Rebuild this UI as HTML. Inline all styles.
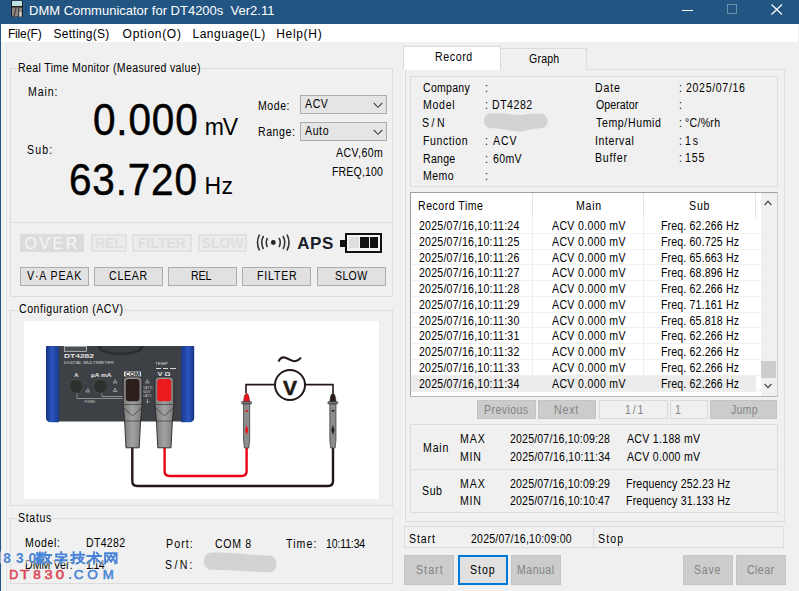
<!DOCTYPE html>
<html><head><meta charset="utf-8">
<style>
*{margin:0;padding:0;box-sizing:border-box}
html,body{width:799px;height:591px;overflow:hidden;background:#f0f0f0;font-family:"Liberation Sans",sans-serif;font-size:12px;color:#000}
.a{position:absolute}
.t{position:absolute;white-space:nowrap;line-height:1;font-family:"Liberation Sans",sans-serif}
.gb{position:absolute;border:1px solid #dcdcdc}
.btn{position:absolute;background:#e1e1e1;border:1px solid #adadad}
.dis{position:absolute;background:#cccccc;border:1px solid #c4c4c4}
</style></head><body>
<!-- title bar -->
<div class="a" style="left:0;top:0;width:799px;height:24px;background:#235582"></div>
<div class="a" style="left:0;top:0;width:1px;height:591px;background:#235582"></div>
<svg class="a" style="left:10px;top:0" width="14" height="18" viewBox="0 0 14 18">
<rect x="0.5" y="0" width="13" height="17.5" fill="#2860b0" opacity="0.7"/>
<rect x="1" y="0.5" width="12" height="16.5" fill="#1b1b1b"/>
<rect x="2" y="1" width="10" height="5" fill="#bde0e0"/>
<rect x="2" y="7.5" width="10" height="9" fill="#8d8985"/>
<path d="M4 16.5 L6 8 M8.5 16.5 V8" stroke="#4a4440" stroke-width="1.2"/>
<rect x="9.5" y="12" width="2" height="4.5" fill="#d8d8d8"/>
</svg>
<div class="a" style="left:29px;top:3px;color:#fff;font-size:13px;line-height:16px;white-space:nowrap">DMM Communicator for DT4200s&nbsp; Ver2.11</div>
<div class="a" style="left:682px;top:10px;width:11px;height:1px;background:#fff"></div>
<div class="a" style="left:727px;top:4px;width:10px;height:10px;border:1px solid #6d8fae"></div>
<svg class="a" style="left:771px;top:4px" width="12" height="11"><path d="M0.5 0.5L11 10.5M11 0.5L0.5 10.5" stroke="#fff" stroke-width="1.2"/></svg>
<!-- menu -->
<div class="a" style="left:1px;top:24px;width:797px;height:18px;background:#fff"></div>
<!-- left panel -->
<div class="a" style="left:4px;top:42px;width:1px;height:549px;background:#f8f8f8"></div>
<div class="a" style="left:6px;top:43px;width:1px;height:548px;background:#e6e6e6"></div>
<div class="gb" style="left:10px;top:68px;width:383px;height:229px"></div>
<div class="a" style="left:17px;top:62px;width:185px;height:12px;background:#f0f0f0"></div>
<!-- combos -->
<div class="a" style="left:300px;top:95px;width:87px;height:19px;background:#e5e5e5;border:1px solid #adadad"></div>
<svg class="a" style="left:373px;top:102px" width="10" height="7"><path d="M0.8 1L5 5.3L9.2 1" fill="none" stroke="#444" stroke-width="1.1"/></svg>
<div class="a" style="left:300px;top:122px;width:87px;height:19px;background:#e5e5e5;border:1px solid #adadad"></div>
<svg class="a" style="left:373px;top:129px" width="10" height="7"><path d="M0.8 1L5 5.3L9.2 1" fill="none" stroke="#444" stroke-width="1.1"/></svg>
<div class="a" style="left:11px;top:222px;width:381px;height:1px;background:#dcdcdc"></div>
<!-- indicators -->
<div class="a" style="left:20px;top:234px;width:64px;height:18px;background:#dcdcdc;color:#f7f7f7;font-size:16px;line-height:19px;text-align:left;padding-left:4.4px;letter-spacing:2.5px">OVER</div>
<div class="a" style="left:91px;top:234px;width:36px;height:18px;border:2px solid #e2e2e2;background:#ececec;color:#dedede;font-weight:bold;font-size:14px;line-height:14px;text-align:center">REL</div>
<div class="a" style="left:132px;top:234px;width:60px;height:18px;border:2px solid #e2e2e2;background:#ececec;color:#dedede;font-weight:bold;font-size:14px;line-height:14px;text-align:center">FILTER</div>
<div class="a" style="left:198px;top:234px;width:49px;height:18px;border:2px solid #e2e2e2;background:#ececec;color:#dedede;font-weight:bold;font-size:14px;line-height:14px;text-align:center">SLOW</div>
<svg class="a" style="left:256px;top:233px" width="35" height="19" viewBox="0 0 35 19">
<circle cx="17.3" cy="9.5" r="2.4" fill="#222"/>
<path d="M11.5 5 Q9 9.5 11.5 14 M7.5 3 Q4 9.5 7.5 16 M3.5 1.5 Q-0.5 9.5 3.5 17.5" fill="none" stroke="#333" stroke-width="1.6"/>
<path d="M23 5 Q25.5 9.5 23 14 M27 3 Q30.5 9.5 27 16 M31 1.5 Q35 9.5 31 17.5" fill="none" stroke="#333" stroke-width="1.6"/>
</svg>
<div class="a" style="left:340px;top:240px;width:6px;height:7px;background:#111"></div>
<div class="a" style="left:345px;top:233px;width:37px;height:20px;border:2px solid #111;background:#f4f4f4"></div>
<div class="a" style="left:349px;top:237px;width:10px;height:11px;background:#dedede"></div>
<div class="a" style="left:360px;top:237px;width:9px;height:11px;background:#111"></div>
<div class="a" style="left:370px;top:237px;width:8px;height:11px;background:#111"></div>
<!-- buttons -->
<div class="btn" style="left:20px;top:267px;width:69px;height:19px"></div>
<div class="btn" style="left:94px;top:267px;width:69px;height:19px"></div>
<div class="btn" style="left:168px;top:267px;width:69px;height:19px"></div>
<div class="btn" style="left:242px;top:267px;width:69px;height:19px"></div>
<div class="btn" style="left:317px;top:267px;width:69px;height:19px"></div>
<!-- configuration group -->
<div class="gb" style="left:10px;top:310px;width:383px;height:196px"></div>
<div class="a" style="left:17px;top:303px;width:107px;height:12px;background:#f0f0f0"></div>
<div class="a" style="left:24px;top:321px;width:355px;height:178px;background:#fff"></div>
<svg class="a" style="left:24px;top:321px" width="355" height="178" viewBox="24 321 355 178">
<defs>
<linearGradient id="bl" x1="0" x2="1" y1="0" y2="0"><stop offset="0" stop-color="#17337e"/><stop offset="0.45" stop-color="#2a56c0"/><stop offset="1" stop-color="#1a3a8c"/></linearGradient>
<linearGradient id="br" x1="0" x2="1" y1="0" y2="0"><stop offset="0" stop-color="#1a3a8c"/><stop offset="0.55" stop-color="#2a56c0"/><stop offset="1" stop-color="#17337e"/></linearGradient>
<linearGradient id="pg" x1="0" x2="1" y1="0" y2="0"><stop offset="0" stop-color="#7a7a7a"/><stop offset="0.5" stop-color="#a2a2a2"/><stop offset="1" stop-color="#7a7a7a"/></linearGradient>
</defs>
<!-- wires -->
<path d="M132.3 446 V481 Q132.3 486 137.3 486 H328 Q333 486 333 481 V447" fill="none" stroke="#231815" stroke-width="2.4"/>
<path d="M164.6 446 V471 Q164.6 476 169.6 476 H241.6 Q246.6 476 246.6 471 V447" fill="none" stroke="#e60012" stroke-width="2.4"/>
<!-- meter body -->
<rect x="52" y="346" width="136" height="75.5" fill="#3d4045"/>
<path d="M59 346 H46.5 Q46 346 46 347 V417.5 Q46 422.3 51 422.3 H59 Z" fill="url(#bl)"/>
<path d="M181.2 346 H193.7 Q194.2 346 194.2 347 V417.5 Q194.2 422.3 189.2 422.3 H181.2 Z" fill="url(#br)"/>
<path d="M97 346 Q99 355 120.5 355 Q142 355 144 346 Z" fill="#2b2d30"/>
<path d="M100.5 346 Q102.5 352.6 120.5 352.6 Q138.5 352.6 140.5 346 Z" fill="#393c40"/>
<rect x="64.3" y="346.3" width="22.3" height="5" fill="#4b4e53" stroke="#d8d8d8" stroke-width="0.7"/>
<text x="64" y="358.4" font-family="Liberation Sans" font-weight="bold" font-size="5.6" fill="#e2e2e2" textLength="30" lengthAdjust="spacingAndGlyphs">DT4282</text>
<text x="63.8" y="363.8" font-family="Liberation Sans" font-size="3.8" fill="#d2d2d2" textLength="50" lengthAdjust="spacingAndGlyphs">DIGITAL MULTIMETER</text>
<text x="74.3" y="376.6" font-family="Liberation Sans" font-weight="bold" font-size="5.8" fill="#e6e6e6">A</text>
<text x="91" y="376.6" font-family="Liberation Sans" font-weight="bold" font-size="5.6" fill="#e6e6e6" textLength="20.5" lengthAdjust="spacingAndGlyphs">µA mA</text>
<circle cx="76" cy="386.3" r="7" fill="#2c322e" stroke="#4d534f" stroke-width="0.7"/>
<circle cx="100.6" cy="386.3" r="7" fill="#2c322e" stroke="#4d534f" stroke-width="0.7"/>
<path d="M77 393.5 V398.5 H123 M102 393.5 V396.5 H123" fill="none" stroke="#c4c4c4" stroke-width="0.6"/>
<text x="84.5" y="403.3" font-family="Liberation Sans" font-size="3.2" fill="#cfcfcf">FUSED</text>
<path d="M86 392 l1.8 -3.4 l1.8 3.4z M113.3 383 l1.8 -3.4 l1.8 3.4z M113.3 391.5 l1.8 -3.4 l1.8 3.4z M145.5 383 l1.8 -3.4 l1.8 3.4z" fill="none" stroke="#d4d4d4" stroke-width="0.6"/>
<text x="143.2" y="389" font-family="Liberation Sans" font-size="3" fill="#d0d0d0">CAT III</text>
<text x="143.2" y="393" font-family="Liberation Sans" font-size="3" fill="#d0d0d0">600V</text>
<text x="143.2" y="397" font-family="Liberation Sans" font-size="3" fill="#d0d0d0">CAT II</text>
<path d="M147.5 399 v4 m-1.5 -1.5 l1.5 1.5 l1.5 -1.5" fill="none" stroke="#d0d0d0" stroke-width="0.6"/>
<rect x="124" y="371.6" width="17" height="4.8" fill="#e8e8e8"/>
<text x="125" y="375.8" font-family="Liberation Sans" font-weight="bold" font-size="4.6" fill="#222" textLength="15" lengthAdjust="spacingAndGlyphs">COM</text>
<text x="157.5" y="376.3" font-family="Liberation Sans" font-weight="bold" font-size="5.8" fill="#e6e6e6" textLength="13" lengthAdjust="spacingAndGlyphs">V Ω</text>
<text x="155" y="365" font-family="Liberation Sans" font-size="3.3" fill="#d8d8d8" textLength="13" lengthAdjust="spacingAndGlyphs">TEMP</text>
<path d="M156 368.5 h5 M163 368.5 h5 M170 368.5 h6" stroke="#d8d8d8" stroke-width="1"/>
<!-- plugs -->
<g stroke="#262626" stroke-width="0.9">
<path d="M123.2 380 Q123.2 377 126.5 377 H138.8 Q142 377 142 380 V404.5 L140.6 421 L139.2 447.8 H126 L124.6 421 L123.2 404.5 Z" fill="url(#pg)"/>
<path d="M155 380 Q155 377 158.3 377 H170.6 Q173.8 377 173.8 380 V404.5 L172.4 421 L171 447.8 H157.8 L156.4 421 L155 404.5 Z" fill="url(#pg)"/>
</g>
<rect x="125.8" y="379" width="13.7" height="22.3" rx="3" fill="#2c1e1b"/>
<rect x="157.2" y="379" width="14" height="22.3" rx="3" fill="#ea1a1f"/>
<path d="M123.5 404.5 H141.7 M123.8 408 L132.6 416 L141.4 408 M124.6 421 H140.6 M155.3 404.5 H173.5 M155.6 408 L164.4 416 L173.2 408 M156.4 421 H172.4" fill="none" stroke="#3a3a3a" stroke-width="0.7"/>
<!-- top circuit -->
<path d="M246 393 V384.6 H274.5 M305.3 384.6 H333 V393" fill="none" stroke="#231815" stroke-width="1.6"/>
<circle cx="290" cy="385" r="15" fill="#fff" stroke="#231815" stroke-width="2"/>
<text x="290" y="394.5" text-anchor="middle" font-family="Liberation Sans" font-weight="bold" font-size="21" fill="#231815" stroke="#231815" stroke-width="0.6">V</text>
<path d="M278.5 361.5 Q281 356 285.5 357.8 T292.5 360.8 Q297.5 362.3 301 357.5" fill="none" stroke="#231815" stroke-width="2"/>
<!-- probes -->
<g>
<path d="M243.5 402 Q244 394 246.6 393 Q249.2 394 249.7 402 Z" fill="#e8161c" stroke="#5a1010" stroke-width="0.5"/>
<rect x="241.5" y="401.5" width="10" height="2.6" rx="1" fill="#777" stroke="#333" stroke-width="0.6"/>
<path d="M243.5 404 H249.7 V440 L248.8 448 H244.4 L243.5 440 Z" fill="#8c8c8c" stroke="#333" stroke-width="0.7"/>
<rect x="245.3" y="410" width="2.6" height="1.6" fill="#e8161c"/>
<path d="M246.6 425 L248.3 430 L246.6 435 L244.9 430 Z" fill="#e8161c"/>
</g>
<g>
<path d="M329.8 402 Q330.3 394 332.9 393 Q335.5 394 336 402 Z" fill="#2b1d1a" stroke="#111" stroke-width="0.5"/>
<rect x="327.8" y="401.5" width="10" height="2.6" rx="1" fill="#777" stroke="#333" stroke-width="0.6"/>
<path d="M329.8 404 H336 V440 L335.1 448 H330.7 L329.8 440 Z" fill="#8c8c8c" stroke="#333" stroke-width="0.7"/>
<rect x="331.6" y="410" width="2.6" height="1.6" fill="#222"/>
<path d="M332.9 425 L334.6 430 L332.9 435 L331.2 430 Z" fill="#222"/>
</g>
</svg>
<!-- status group -->
<div class="gb" style="left:10px;top:518px;width:383px;height:66px"></div>
<div class="a" style="left:17px;top:512px;width:35px;height:12px;background:#f0f0f0"></div>
<svg class="a" style="left:200px;top:549px" width="82" height="27" viewBox="200 549 82 27"><path d="M212 552.5 C240 552.5 250 555.3 270 555.8 C279 556 278.5 572.3 269 572.3 C250 572 235 569.5 212 570.1 C201 570.3 201 552.5 212 552.5 Z" fill="#d3d3d3"/></svg>
<!-- right panel: tabs -->
<div class="a" style="left:403px;top:69px;width:1px;height:453px;background:#fafafa"></div>
<div class="a" style="left:405px;top:69px;width:380px;height:453px;border:1px solid #dedede"></div>
<div class="a" style="left:500px;top:48px;width:87px;height:22px;background:#f0f0f0;border:1px solid #dcdcdc;border-bottom:none"></div>
<div class="a" style="left:403px;top:46px;width:98px;height:24px;background:#fff;border:1px solid #dcdcdc;border-bottom:none"></div>
<!-- info box -->
<div class="a" style="left:410px;top:76px;width:368px;height:111px;border:1px solid #dcdcdc"></div>
<svg class="a" style="left:480px;top:110px" width="72" height="24" viewBox="480 110 72 24"><path d="M491 113.2 C505 113.2 512 114.5 519 115 C526 114.5 532 113.5 540 113.5 C550 113.5 550.5 128.2 540 128.2 C532 128.3 526 131.5 519 131.5 C512 131.5 505 128.2 491 128.2 C481.5 128.2 481.5 113.2 491 113.2 Z" fill="#d3d3d3"/></svg>
<!-- table -->
<div class="a" style="left:410px;top:192px;width:368px;height:205px;border:1px solid #a0a0a0;background:#fff;border-right-color:#d0d0d0;border-bottom-color:#b8b8b8"></div>
<div class="a" style="left:532px;top:193px;width:1px;height:25px;background:#e5e5e5"></div>
<div class="a" style="left:643px;top:193px;width:1px;height:25px;background:#e5e5e5"></div>
<div class="a" style="left:755px;top:193px;width:1px;height:25px;background:#e5e5e5"></div>
<div class="a" style="left:761px;top:193px;width:16px;height:203px;background:#f0f0f0"></div>
<svg class="a" style="left:764px;top:200px" width="8" height="6"><path d="M0.6 5L4 1.3L7.4 5" fill="none" stroke="#555" stroke-width="1.4"/></svg>
<svg class="a" style="left:764px;top:383px" width="8" height="6"><path d="M0.6 1L4 4.7L7.4 1" fill="none" stroke="#555" stroke-width="1.4"/></svg>
<div class="a" style="left:761px;top:361px;width:15px;height:17px;background:#cdcdcd"></div>
<div class="a" style="left:411px;top:232.76px;width:350px;height:1px;background:#f0f0f0"></div>
<div class="a" style="left:411px;top:248.52px;width:350px;height:1px;background:#f0f0f0"></div>
<div class="a" style="left:411px;top:264.28px;width:350px;height:1px;background:#f0f0f0"></div>
<div class="a" style="left:411px;top:280.04px;width:350px;height:1px;background:#f0f0f0"></div>
<div class="a" style="left:411px;top:295.80px;width:350px;height:1px;background:#f0f0f0"></div>
<div class="a" style="left:411px;top:311.56px;width:350px;height:1px;background:#f0f0f0"></div>
<div class="a" style="left:411px;top:327.32px;width:350px;height:1px;background:#f0f0f0"></div>
<div class="a" style="left:411px;top:343.08px;width:350px;height:1px;background:#f0f0f0"></div>
<div class="a" style="left:411px;top:358.84px;width:350px;height:1px;background:#f0f0f0"></div>
<div class="a" style="left:411px;top:374.60px;width:350px;height:1px;background:#f0f0f0"></div>
<div class="a" style="left:411px;top:375.60px;width:345px;height:16px;background:#ececec"></div>
<div class="a" style="left:411px;top:390.36px;width:350px;height:1px;background:#f0f0f0"></div>
<div class="a" style="left:532px;top:218px;width:1px;height:174px;background:#f0f0f0"></div>
<div class="a" style="left:643px;top:218px;width:1px;height:174px;background:#f0f0f0"></div>
<!-- pagination -->
<div class="dis" style="left:477px;top:400px;width:59px;height:19px"></div>
<div class="dis" style="left:538px;top:400px;width:58px;height:19px"></div>
<div class="a" style="left:599px;top:400px;width:69px;height:19px;border:1px solid #dadada;background:#f0f0f0"></div>
<div class="a" style="left:670px;top:400px;width:38px;height:19px;border:1px solid #dadada;background:#f0f0f0"></div>
<div class="dis" style="left:710px;top:400px;width:67px;height:19px"></div>
<!-- stats -->
<div class="a" style="left:410px;top:424px;width:368px;height:89px;border:1px solid #dcdcdc"></div>
<div class="a" style="left:411px;top:469px;width:366px;height:1px;background:#dcdcdc"></div>
<!-- status bar -->
<div class="a" style="left:404px;top:526px;width:190px;height:22px;border:1px solid #dcdcdc"></div>
<div class="a" style="left:593px;top:526px;width:191px;height:22px;border:1px solid #dcdcdc"></div>
<!-- bottom buttons -->
<div class="dis" style="left:404px;top:555px;width:50px;height:30px"></div>
<div class="btn" style="left:458px;top:555px;width:50px;height:30px;border:2px solid #0078d7"></div>
<div class="dis" style="left:511px;top:555px;width:50px;height:30px"></div>
<div class="dis" style="left:683px;top:555px;width:50px;height:30px"></div>
<div class="dis" style="left:736px;top:555px;width:50px;height:30px"></div>

<div class="t" style="left:7.90px;top:28.00px;font-size:12px;letter-spacing:-0.150px;">File(F)</div>
<div class="t" style="left:53.40px;top:28.00px;font-size:12px;letter-spacing:0.289px;">Setting(S)</div>
<div class="t" style="left:122.60px;top:28.00px;font-size:12px;letter-spacing:0.700px;">Option(O)</div>
<div class="t" style="left:192.60px;top:28.00px;font-size:12px;letter-spacing:0.460px;">Language(L)</div>
<div class="t" style="left:276.20px;top:28.00px;font-size:12px;letter-spacing:0.683px;">Help(H)</div>
<div class="t" style="left:18.30px;top:62.00px;font-size:12px;letter-spacing:0.403px;;transform:scaleX(0.88);transform-origin:0 0">Real Time Monitor (Measured value)</div>
<div class="t" style="left:27.70px;top:85.50px;font-size:12px;letter-spacing:1.023px;;transform:scaleX(0.88);transform-origin:0 0">Main:</div>
<div class="t" style="left:93.00px;top:98.30px;font-size:44px;letter-spacing:0.924px;-webkit-text-stroke:0.5px #000;transform:scaleX(0.92);transform-origin:0 0">0.000</div>
<div class="t" style="left:204.80px;top:116.00px;font-size:23px;letter-spacing:-1.100px;">mV</div>
<div class="t" style="left:257.90px;top:99.60px;font-size:12px;letter-spacing:0.625px;;transform:scaleX(0.88);transform-origin:0 0">Mode:</div>
<div class="t" style="left:305.10px;top:98.20px;font-size:12px;letter-spacing:0.682px;;transform:scaleX(0.88);transform-origin:0 0">ACV</div>
<div class="t" style="left:257.90px;top:125.60px;font-size:12px;letter-spacing:0.636px;;transform:scaleX(0.88);transform-origin:0 0">Range:</div>
<div class="t" style="left:305.10px;top:124.80px;font-size:12px;letter-spacing:0.682px;;transform:scaleX(0.88);transform-origin:0 0">Auto</div>
<div class="t" style="left:335.80px;top:146.80px;font-size:12px;letter-spacing:0.511px;;transform:scaleX(0.88);transform-origin:0 0">ACV,60m</div>
<div class="t" style="left:331.50px;top:165.80px;font-size:12px;letter-spacing:0.162px;;transform:scaleX(0.88);transform-origin:0 0">FREQ,100</div>
<div class="t" style="left:27.30px;top:144.40px;font-size:12px;letter-spacing:1.288px;;transform:scaleX(0.88);transform-origin:0 0">Sub:</div>
<div class="t" style="left:69.00px;top:157.50px;font-size:44px;letter-spacing:0.891px;-webkit-text-stroke:0.5px #000;transform:scaleX(0.92);transform-origin:0 0">63.720</div>
<div class="t" style="left:204.60px;top:175.40px;font-size:23px;letter-spacing:0.400px;">Hz</div>
<div class="t" style="left:26.60px;top:270.30px;font-size:12px;letter-spacing:1.006px;;transform:scaleX(0.88);transform-origin:0 0">V·A PEAK</div>
<div class="t" style="left:108.80px;top:270.30px;font-size:12px;letter-spacing:0.852px;;transform:scaleX(0.88);transform-origin:0 0">CLEAR</div>
<div class="t" style="left:190.80px;top:270.30px;font-size:12px;letter-spacing:-0.114px;;transform:scaleX(0.88);transform-origin:0 0">REL</div>
<div class="t" style="left:256.60px;top:270.30px;font-size:12px;letter-spacing:0.932px;;transform:scaleX(0.88);transform-origin:0 0">FILTER</div>
<div class="t" style="left:334.90px;top:270.30px;font-size:12px;letter-spacing:0.379px;;transform:scaleX(0.88);transform-origin:0 0">SLOW</div>
<div class="t" style="left:297.20px;top:234.70px;font-size:17px;letter-spacing:0.650px;color:#1b1d2b;font-weight:bold">APS</div>
<div class="t" style="left:18.80px;top:303.30px;font-size:12px;letter-spacing:0.600px;;transform:scaleX(0.88);transform-origin:0 0">Configuration (ACV)</div>
<div class="t" style="left:17.50px;top:511.80px;font-size:12px;letter-spacing:0.773px;;transform:scaleX(0.88);transform-origin:0 0">Status</div>
<div class="t" style="left:25.30px;top:537.30px;font-size:12px;letter-spacing:0.727px;;transform:scaleX(0.88);transform-origin:0 0">Model:</div>
<div class="t" style="left:85.50px;top:537.30px;font-size:12px;letter-spacing:0.341px;;transform:scaleX(0.88);transform-origin:0 0">DT4282</div>
<div class="t" style="left:25.30px;top:558.80px;font-size:12px;letter-spacing:0.114px;;transform:scaleX(0.88);transform-origin:0 0">DMM Ver:</div>
<div class="t" style="left:86.30px;top:558.80px;font-size:12px;letter-spacing:-0.720px;;transform:scaleX(0.88);transform-origin:0 0">1.14</div>
<div class="t" style="left:166.20px;top:537.60px;font-size:12px;letter-spacing:1.278px;;transform:scaleX(0.88);transform-origin:0 0">Port:</div>
<div class="t" style="left:214.80px;top:537.60px;font-size:12px;letter-spacing:0.767px;;transform:scaleX(0.88);transform-origin:0 0">COM 8</div>
<div class="t" style="left:286.00px;top:537.60px;font-size:12px;letter-spacing:1.222px;;transform:scaleX(0.88);transform-origin:0 0">Time:</div>
<div class="t" style="left:325.80px;top:537.60px;font-size:12px;letter-spacing:-0.179px;;transform:scaleX(0.88);transform-origin:0 0">10:11:34</div>
<div class="t" style="left:165.30px;top:558.60px;font-size:12px;letter-spacing:2.652px;;transform:scaleX(0.88);transform-origin:0 0">S/N:</div>
<div class="t" style="left:434.50px;top:51.30px;font-size:12px;letter-spacing:0.705px;;transform:scaleX(0.88);transform-origin:0 0">Record</div>
<div class="t" style="left:529.40px;top:52.80px;font-size:12px;letter-spacing:0.227px;;transform:scaleX(0.88);transform-origin:0 0">Graph</div>
<div class="t" style="left:422.90px;top:81.70px;font-size:12px;letter-spacing:0.284px;;transform:scaleX(0.88);transform-origin:0 0">Company</div>
<div class="t" style="left:422.80px;top:99.20px;font-size:12px;letter-spacing:0.824px;;transform:scaleX(0.88);transform-origin:0 0">Model</div>
<div class="t" style="left:422.00px;top:116.70px;font-size:12px;letter-spacing:2.841px;;transform:scaleX(0.88);transform-origin:0 0">S/N</div>
<div class="t" style="left:422.80px;top:134.60px;font-size:12px;letter-spacing:0.649px;;transform:scaleX(0.88);transform-origin:0 0">Function</div>
<div class="t" style="left:422.80px;top:152.50px;font-size:12px;letter-spacing:0.312px;;transform:scaleX(0.88);transform-origin:0 0">Range</div>
<div class="t" style="left:422.80px;top:170.20px;font-size:12px;letter-spacing:0.492px;;transform:scaleX(0.88);transform-origin:0 0">Memo</div>
<div class="t" style="left:485.00px;top:81.70px;font-size:12px;letter-spacing:0.000px;;transform:scaleX(0.88);transform-origin:0 0">:</div>
<div class="t" style="left:485.00px;top:99.20px;font-size:12px;letter-spacing:0.000px;;transform:scaleX(0.88);transform-origin:0 0">:</div>
<div class="t" style="left:485.00px;top:134.60px;font-size:12px;letter-spacing:0.000px;;transform:scaleX(0.88);transform-origin:0 0">:</div>
<div class="t" style="left:485.00px;top:152.50px;font-size:12px;letter-spacing:0.000px;;transform:scaleX(0.88);transform-origin:0 0">:</div>
<div class="t" style="left:485.00px;top:170.20px;font-size:12px;letter-spacing:0.000px;;transform:scaleX(0.88);transform-origin:0 0">:</div>
<div class="t" style="left:492.00px;top:99.20px;font-size:12px;letter-spacing:0.591px;;transform:scaleX(0.88);transform-origin:0 0">DT4282</div>
<div class="t" style="left:493.00px;top:134.60px;font-size:12px;letter-spacing:1.023px;;transform:scaleX(0.88);transform-origin:0 0">ACV</div>
<div class="t" style="left:493.00px;top:152.50px;font-size:12px;letter-spacing:0.379px;;transform:scaleX(0.88);transform-origin:0 0">60mV</div>
<div class="t" style="left:595.40px;top:81.60px;font-size:12px;letter-spacing:0.985px;;transform:scaleX(0.88);transform-origin:0 0">Date</div>
<div class="t" style="left:596.40px;top:99.20px;font-size:12px;letter-spacing:0.097px;;transform:scaleX(0.88);transform-origin:0 0">Operator</div>
<div class="t" style="left:596.40px;top:116.70px;font-size:12px;letter-spacing:0.720px;;transform:scaleX(0.88);transform-origin:0 0">Temp/Humid</div>
<div class="t" style="left:595.40px;top:134.60px;font-size:12px;letter-spacing:0.666px;;transform:scaleX(0.88);transform-origin:0 0">Interval</div>
<div class="t" style="left:595.40px;top:152.30px;font-size:12px;letter-spacing:0.909px;;transform:scaleX(0.88);transform-origin:0 0">Buffer</div>
<div class="t" style="left:678.50px;top:81.60px;font-size:12px;letter-spacing:0.000px;;transform:scaleX(0.88);transform-origin:0 0">:</div>
<div class="t" style="left:678.50px;top:99.20px;font-size:12px;letter-spacing:0.000px;;transform:scaleX(0.88);transform-origin:0 0">:</div>
<div class="t" style="left:678.50px;top:116.70px;font-size:12px;letter-spacing:0.000px;;transform:scaleX(0.88);transform-origin:0 0">:</div>
<div class="t" style="left:678.50px;top:134.60px;font-size:12px;letter-spacing:0.000px;;transform:scaleX(0.88);transform-origin:0 0">:</div>
<div class="t" style="left:678.50px;top:152.30px;font-size:12px;letter-spacing:0.000px;;transform:scaleX(0.88);transform-origin:0 0">:</div>
<div class="t" style="left:686.10px;top:81.60px;font-size:12px;letter-spacing:0.770px;;transform:scaleX(0.88);transform-origin:0 0">2025/07/16</div>
<div class="t" style="left:684.70px;top:116.70px;font-size:12px;letter-spacing:0.341px;;transform:scaleX(0.88);transform-origin:0 0">°C/%rh</div>
<div class="t" style="left:684.70px;top:134.60px;font-size:12px;letter-spacing:2.045px;;transform:scaleX(0.88);transform-origin:0 0">1s</div>
<div class="t" style="left:685.00px;top:152.30px;font-size:12px;letter-spacing:0.966px;;transform:scaleX(0.88);transform-origin:0 0">155</div>
<div class="t" style="left:417.50px;top:200.00px;font-size:12px;letter-spacing:0.580px;;transform:scaleX(0.88);transform-origin:0 0">Record Time</div>
<div class="t" style="left:575.90px;top:199.60px;font-size:12px;letter-spacing:0.871px;;transform:scaleX(0.88);transform-origin:0 0">Main</div>
<div class="t" style="left:688.90px;top:199.80px;font-size:12px;letter-spacing:0.966px;;transform:scaleX(0.88);transform-origin:0 0">Sub</div>
<div class="t" style="left:418.50px;top:220.00px;font-size:12px;letter-spacing:0.265px;;transform:scaleX(0.88);transform-origin:0 0">2025/07/16,10:11:24</div>
<div class="t" style="left:552.00px;top:220.00px;font-size:12px;letter-spacing:0.382px;;transform:scaleX(0.88);transform-origin:0 0">ACV 0.000 mV</div>
<div class="t" style="left:660.80px;top:220.00px;font-size:12px;letter-spacing:0.187px;;transform:scaleX(0.88);transform-origin:0 0">Freq. 62.266 Hz</div>
<div class="t" style="left:418.50px;top:235.76px;font-size:12px;letter-spacing:0.265px;;transform:scaleX(0.88);transform-origin:0 0">2025/07/16,10:11:25</div>
<div class="t" style="left:552.00px;top:235.76px;font-size:12px;letter-spacing:0.382px;;transform:scaleX(0.88);transform-origin:0 0">ACV 0.000 mV</div>
<div class="t" style="left:660.80px;top:235.76px;font-size:12px;letter-spacing:0.187px;;transform:scaleX(0.88);transform-origin:0 0">Freq. 60.725 Hz</div>
<div class="t" style="left:418.50px;top:251.52px;font-size:12px;letter-spacing:0.265px;;transform:scaleX(0.88);transform-origin:0 0">2025/07/16,10:11:26</div>
<div class="t" style="left:552.00px;top:251.52px;font-size:12px;letter-spacing:0.382px;;transform:scaleX(0.88);transform-origin:0 0">ACV 0.000 mV</div>
<div class="t" style="left:660.80px;top:251.52px;font-size:12px;letter-spacing:0.187px;;transform:scaleX(0.88);transform-origin:0 0">Freq. 65.663 Hz</div>
<div class="t" style="left:418.50px;top:267.28px;font-size:12px;letter-spacing:0.265px;;transform:scaleX(0.88);transform-origin:0 0">2025/07/16,10:11:27</div>
<div class="t" style="left:552.00px;top:267.28px;font-size:12px;letter-spacing:0.382px;;transform:scaleX(0.88);transform-origin:0 0">ACV 0.000 mV</div>
<div class="t" style="left:660.80px;top:267.28px;font-size:12px;letter-spacing:0.187px;;transform:scaleX(0.88);transform-origin:0 0">Freq. 68.896 Hz</div>
<div class="t" style="left:418.50px;top:283.04px;font-size:12px;letter-spacing:0.265px;;transform:scaleX(0.88);transform-origin:0 0">2025/07/16,10:11:28</div>
<div class="t" style="left:552.00px;top:283.04px;font-size:12px;letter-spacing:0.382px;;transform:scaleX(0.88);transform-origin:0 0">ACV 0.000 mV</div>
<div class="t" style="left:660.80px;top:283.04px;font-size:12px;letter-spacing:0.187px;;transform:scaleX(0.88);transform-origin:0 0">Freq. 62.266 Hz</div>
<div class="t" style="left:418.50px;top:298.80px;font-size:12px;letter-spacing:0.265px;;transform:scaleX(0.88);transform-origin:0 0">2025/07/16,10:11:29</div>
<div class="t" style="left:552.00px;top:298.80px;font-size:12px;letter-spacing:0.382px;;transform:scaleX(0.88);transform-origin:0 0">ACV 0.000 mV</div>
<div class="t" style="left:660.80px;top:298.80px;font-size:12px;letter-spacing:0.187px;;transform:scaleX(0.88);transform-origin:0 0">Freq. 71.161 Hz</div>
<div class="t" style="left:418.50px;top:314.56px;font-size:12px;letter-spacing:0.265px;;transform:scaleX(0.88);transform-origin:0 0">2025/07/16,10:11:30</div>
<div class="t" style="left:552.00px;top:314.56px;font-size:12px;letter-spacing:0.382px;;transform:scaleX(0.88);transform-origin:0 0">ACV 0.000 mV</div>
<div class="t" style="left:660.80px;top:314.56px;font-size:12px;letter-spacing:0.187px;;transform:scaleX(0.88);transform-origin:0 0">Freq. 65.818 Hz</div>
<div class="t" style="left:418.50px;top:330.32px;font-size:12px;letter-spacing:0.265px;;transform:scaleX(0.88);transform-origin:0 0">2025/07/16,10:11:31</div>
<div class="t" style="left:552.00px;top:330.32px;font-size:12px;letter-spacing:0.382px;;transform:scaleX(0.88);transform-origin:0 0">ACV 0.000 mV</div>
<div class="t" style="left:660.80px;top:330.32px;font-size:12px;letter-spacing:0.187px;;transform:scaleX(0.88);transform-origin:0 0">Freq. 62.266 Hz</div>
<div class="t" style="left:418.50px;top:346.08px;font-size:12px;letter-spacing:0.265px;;transform:scaleX(0.88);transform-origin:0 0">2025/07/16,10:11:32</div>
<div class="t" style="left:552.00px;top:346.08px;font-size:12px;letter-spacing:0.382px;;transform:scaleX(0.88);transform-origin:0 0">ACV 0.000 mV</div>
<div class="t" style="left:660.80px;top:346.08px;font-size:12px;letter-spacing:0.187px;;transform:scaleX(0.88);transform-origin:0 0">Freq. 62.266 Hz</div>
<div class="t" style="left:418.50px;top:361.84px;font-size:12px;letter-spacing:0.265px;;transform:scaleX(0.88);transform-origin:0 0">2025/07/16,10:11:33</div>
<div class="t" style="left:552.00px;top:361.84px;font-size:12px;letter-spacing:0.382px;;transform:scaleX(0.88);transform-origin:0 0">ACV 0.000 mV</div>
<div class="t" style="left:660.80px;top:361.84px;font-size:12px;letter-spacing:0.187px;;transform:scaleX(0.88);transform-origin:0 0">Freq. 62.266 Hz</div>
<div class="t" style="left:418.50px;top:377.60px;font-size:12px;letter-spacing:0.265px;;transform:scaleX(0.88);transform-origin:0 0">2025/07/16,10:11:34</div>
<div class="t" style="left:552.00px;top:377.60px;font-size:12px;letter-spacing:0.382px;;transform:scaleX(0.88);transform-origin:0 0">ACV 0.000 mV</div>
<div class="t" style="left:660.80px;top:377.60px;font-size:12px;letter-spacing:0.187px;;transform:scaleX(0.88);transform-origin:0 0">Freq. 62.266 Hz</div>
<div class="t" style="left:484.00px;top:404.20px;font-size:12px;letter-spacing:0.487px;color:#838383;transform:scaleX(0.88);transform-origin:0 0">Previous</div>
<div class="t" style="left:553.70px;top:404.20px;font-size:12px;letter-spacing:0.947px;color:#838383;transform:scaleX(0.88);transform-origin:0 0">Next</div>
<div class="t" style="left:624.60px;top:404.20px;font-size:12px;letter-spacing:2.045px;color:#838383;transform:scaleX(0.88);transform-origin:0 0">1/1</div>
<div class="t" style="left:674.80px;top:404.20px;font-size:12px;letter-spacing:0.000px;color:#838383;transform:scaleX(0.88);transform-origin:0 0">1</div>
<div class="t" style="left:730.90px;top:403.80px;font-size:12px;letter-spacing:0.265px;color:#838383;transform:scaleX(0.88);transform-origin:0 0">Jump</div>
<div class="t" style="left:422.60px;top:442.20px;font-size:12px;letter-spacing:0.947px;;transform:scaleX(0.88);transform-origin:0 0">Main</div>
<div class="t" style="left:421.80px;top:485.00px;font-size:12px;letter-spacing:0.682px;;transform:scaleX(0.88);transform-origin:0 0">Sub</div>
<div class="t" style="left:460.20px;top:432.90px;font-size:12px;letter-spacing:1.136px;;transform:scaleX(0.88);transform-origin:0 0">MAX</div>
<div class="t" style="left:509.50px;top:432.90px;font-size:12px;letter-spacing:0.196px;;transform:scaleX(0.88);transform-origin:0 0">2025/07/16,10:09:28</div>
<div class="t" style="left:626.50px;top:432.90px;font-size:12px;letter-spacing:0.341px;;transform:scaleX(0.88);transform-origin:0 0">ACV 1.188 mV</div>
<div class="t" style="left:460.20px;top:450.50px;font-size:12px;letter-spacing:0.909px;;transform:scaleX(0.88);transform-origin:0 0">MIN</div>
<div class="t" style="left:509.50px;top:450.50px;font-size:12px;letter-spacing:0.259px;;transform:scaleX(0.88);transform-origin:0 0">2025/07/16,10:11:34</div>
<div class="t" style="left:626.50px;top:450.50px;font-size:12px;letter-spacing:0.341px;;transform:scaleX(0.88);transform-origin:0 0">ACV 0.000 mV</div>
<div class="t" style="left:460.20px;top:477.60px;font-size:12px;letter-spacing:1.136px;;transform:scaleX(0.88);transform-origin:0 0">MAX</div>
<div class="t" style="left:509.50px;top:477.60px;font-size:12px;letter-spacing:0.196px;;transform:scaleX(0.88);transform-origin:0 0">2025/07/16,10:09:29</div>
<div class="t" style="left:625.50px;top:477.60px;font-size:12px;letter-spacing:0.208px;;transform:scaleX(0.88);transform-origin:0 0">Frequency 252.23 Hz</div>
<div class="t" style="left:460.20px;top:495.00px;font-size:12px;letter-spacing:0.909px;;transform:scaleX(0.88);transform-origin:0 0">MIN</div>
<div class="t" style="left:509.50px;top:495.00px;font-size:12px;letter-spacing:0.196px;;transform:scaleX(0.88);transform-origin:0 0">2025/07/16,10:10:47</div>
<div class="t" style="left:625.50px;top:495.00px;font-size:12px;letter-spacing:0.208px;;transform:scaleX(0.88);transform-origin:0 0">Frequency 31.133 Hz</div>
<div class="t" style="left:409.20px;top:533.10px;font-size:12px;letter-spacing:1.051px;;transform:scaleX(0.88);transform-origin:0 0">Start</div>
<div class="t" style="left:471.00px;top:533.10px;font-size:12px;letter-spacing:0.234px;;transform:scaleX(0.88);transform-origin:0 0">2025/07/16,10:09:00</div>
<div class="t" style="left:598.20px;top:533.10px;font-size:12px;letter-spacing:1.288px;;transform:scaleX(0.88);transform-origin:0 0">Stop</div>
<div class="t" style="left:416.00px;top:564.20px;font-size:12px;letter-spacing:1.222px;color:#838383;transform:scaleX(0.88);transform-origin:0 0">Start</div>
<div class="t" style="left:470.00px;top:564.20px;font-size:12px;letter-spacing:1.136px;;transform:scaleX(0.88);transform-origin:0 0">Stop</div>
<div class="t" style="left:517.40px;top:564.20px;font-size:12px;letter-spacing:0.545px;color:#838383;transform:scaleX(0.88);transform-origin:0 0">Manual</div>
<div class="t" style="left:693.80px;top:563.60px;font-size:12px;letter-spacing:0.909px;color:#838383;transform:scaleX(0.88);transform-origin:0 0">Save</div>
<div class="t" style="left:747.30px;top:563.60px;font-size:12px;letter-spacing:0.511px;color:#838383;transform:scaleX(0.88);transform-origin:0 0">Clear</div>
<svg class="a" style="left:0;top:545px" width="130" height="40" viewBox="0 545 130 40">
<rect x="0" y="551.5" width="122" height="12" fill="#f0f0f0" opacity="0.55"/>
<g font-family="Liberation Sans" font-weight="bold" font-size="14.5" fill="#4a84d6">
<text x="3.3" y="563.3" textLength="7.6" lengthAdjust="spacingAndGlyphs">8</text>
<text x="16" y="563.3" textLength="7.6" lengthAdjust="spacingAndGlyphs">3</text>
<text x="28.5" y="563.3" textLength="7.6" lengthAdjust="spacingAndGlyphs">0</text>
</g>
<g fill="none" stroke="#4a84d6" stroke-width="1.9" stroke-linecap="square">
<!-- 数 x36-51.4 -->
<path d="M36.5 554.8H43.5 M40 552.5V558.5 M37.3 552.8L38.3 554 M42.6 552.8L41.6 554 M40 555.5L36.6 558.2 M40 555.5L43.3 558 M36.5 559.8H43.5 M39.2 558.6L37.5 563.3 M37.3 561.3Q41.5 562.5 43.2 563.4 M42.3 559.8Q41.5 562.5 36.6 563.5 M45.6 552.4L44.3 556 M44.6 555H51 M49.6 555Q48.5 560.5 44.5 563.5 M45.8 557.5Q47.8 561.5 51.2 563.4"/>
<!-- 字 x55.6-66.9 -->
<path d="M61.2 552.2V553.8 M56.2 556.6V554.4H66.3V556.6 M58.2 557.1H64.2L61.3 559.3 M61.3 559.3V563Q61.3 563.6 60 563.4 M55.7 560.2H66.9"/>
<!-- 技 x71-84.1 -->
<path d="M71.2 555.3H75.6 M73.6 552.3V562.6Q73.6 563.5 72.4 563.2 M71.1 560.2L75.6 558.1 M76.3 554.7H84.1 M80.2 552.3V557.3 M77 557.6H83.2Q81.3 562 76.6 563.5 M78.4 558.4Q80.5 562.2 84.2 563.3"/>
<!-- 术 x87-101.3 -->
<path d="M87.3 556H101 M94 552.3V563.5 M93.6 556.5Q91.5 560.5 87.2 563.2 M94.4 556.5Q96.8 560.5 101.3 563.2 M96.8 552.8L98.3 554.5"/>
<!-- 网 x104.3-117.4 -->
<path d="M105.1 563.5V553.2H116.6V562.4Q116.6 563.4 115.2 563.2 M107.2 555.5L110.8 561.2 M110.8 555.3L107 561.6 M111.2 555.5L114.8 561.2 M114.8 555.3L111 561.6"/>
</g>
<g font-family="Liberation Sans" font-size="13.2" stroke-width="0.55">
<text x="9.2" y="578.6" fill="#db4451" stroke="#db4451" textLength="9" lengthAdjust="spacingAndGlyphs">D</text>
<text x="20" y="578.6" fill="#db4451" stroke="#db4451" textLength="9.4" lengthAdjust="spacingAndGlyphs">T</text>
<text x="33.3" y="578.6" fill="#db4451" stroke="#db4451" textLength="7.5" lengthAdjust="spacingAndGlyphs">8</text>
<text x="44.6" y="578.6" fill="#db4451" stroke="#db4451" textLength="8.2" lengthAdjust="spacingAndGlyphs">3</text>
<text x="55.8" y="578.6" fill="#db4451" stroke="#db4451" textLength="8.3" lengthAdjust="spacingAndGlyphs">0</text>
<text x="68.2" y="578.6" fill="#4a84d6" font-weight="bold">.</text>
<text x="73.8" y="578.6" fill="#4a84d6" stroke="#4a84d6" textLength="9.8" lengthAdjust="spacingAndGlyphs">C</text>
<text x="87.2" y="578.6" fill="#4a84d6" stroke="#4a84d6" textLength="10.6" lengthAdjust="spacingAndGlyphs">O</text>
<text x="102.8" y="578.6" fill="#4a84d6" stroke="#4a84d6" textLength="11" lengthAdjust="spacingAndGlyphs">M</text>
</g>
</svg>

</body></html>
